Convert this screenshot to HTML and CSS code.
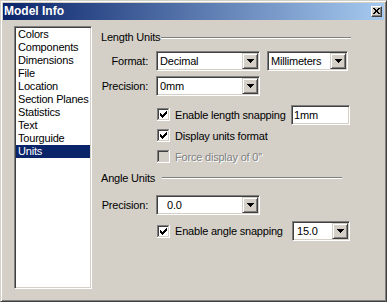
FILE: index.html
```html
<!DOCTYPE html>
<html>
<head>
<meta charset="utf-8">
<link rel="stylesheet" href="styles.css">
</head>
<body>
<div class="window">
  <div class="titlebar">
    <span class="title">Model Info</span>
    <span class="close-btn"><svg width="7" height="6" viewBox="0 0 7 6" shape-rendering="crispEdges"><path d="M0 0h2v1H0z M5 0h2v1H5z M1 1h2v1H1z M4 1h2v1H4z M2 2h3v1H2z M2 3h3v1H2z M1 4h2v1H1z M4 4h2v1H4z M0 5h2v1H0z M5 5h2v1H5z" fill="#000"/></svg></span>
  </div>
  <div class="content">
    <ul class="listbox">
      <li>Colors</li>
      <li>Components</li>
      <li>Dimensions</li>
      <li>File</li>
      <li>Location</li>
      <li>Section Planes</li>
      <li>Statistics</li>
      <li>Text</li>
      <li>Tourguide</li>
      <li class="selected">Units</li>
    </ul>
    <div class="panel">
      <div class="group-head head-length"><span class="head-text">Length Units</span><span class="rule rule-length"></span></div>

      <div class="row row-format">
        <span class="lbl">Format:</span>
        <div class="combo combo-wide"><span class="combo-text">Decimal</span><span class="drop"><svg width="7" height="4" viewBox="0 0 7 4" shape-rendering="crispEdges"><path d="M0 0h7v1H0z M1 1h5v1H1z M2 2h3v1H2z M3 3h1v1H3z" fill="#000"/></svg></span></div>
        <div class="combo combo-unit"><span class="combo-text">Millimeters</span><span class="drop"><svg width="7" height="4" viewBox="0 0 7 4" shape-rendering="crispEdges"><path d="M0 0h7v1H0z M1 1h5v1H1z M2 2h3v1H2z M3 3h1v1H3z" fill="#000"/></svg></span></div>
      </div>

      <div class="row row-precision">
        <span class="lbl">Precision:</span>
        <div class="combo combo-wide"><span class="combo-text">0mm</span><span class="drop"><svg width="7" height="4" viewBox="0 0 7 4" shape-rendering="crispEdges"><path d="M0 0h7v1H0z M1 1h5v1H1z M2 2h3v1H2z M3 3h1v1H3z" fill="#000"/></svg></span></div>
      </div>

      <div class="check-row check-first">
        <span class="checkbox"><svg width="13" height="13" viewBox="0 0 13 13" shape-rendering="crispEdges"><rect width="13" height="13" fill="#fff"/><path d="M0 0h12v1H0z M0 0h1v12H0z" fill="#808080"/><path d="M1 1h10v1H1z M1 1h1v10H1z" fill="#404040"/><path d="M1 11h11v1H1z M11 1h1v11h-1z" fill="#d4d0c8"/><path d="M9 3h1v1H9z M8 4h2v1H8z M3 5h1v1H3z M7 5h3v1H7z M3 6h2v1H3z M6 6h3v1H6z M3 7h5v1H3z M4 8h3v1H4z M5 9h1v1H5z" fill="#000"/></svg></span>
        <span class="check-label label-length">Enable length snapping</span>
        <span class="textbox">1mm</span>
      </div>

      <div class="check-row">
        <span class="checkbox"><svg width="13" height="13" viewBox="0 0 13 13" shape-rendering="crispEdges"><rect width="13" height="13" fill="#fff"/><path d="M0 0h12v1H0z M0 0h1v12H0z" fill="#808080"/><path d="M1 1h10v1H1z M1 1h1v10H1z" fill="#404040"/><path d="M1 11h11v1H1z M11 1h1v11h-1z" fill="#d4d0c8"/><path d="M9 3h1v1H9z M8 4h2v1H8z M3 5h1v1H3z M7 5h3v1H7z M3 6h2v1H3z M6 6h3v1H6z M3 7h5v1H3z M4 8h3v1H4z M5 9h1v1H5z" fill="#000"/></svg></span>
        <span class="check-label">Display units format</span>
      </div>

      <div class="check-row">
        <span class="checkbox"><svg width="13" height="13" viewBox="0 0 13 13" shape-rendering="crispEdges"><rect width="13" height="13" fill="#fff"/><path d="M0 0h12v1H0z M0 0h1v12H0z" fill="#808080"/><path d="M1 1h10v1H1z M1 1h1v10H1z" fill="#404040"/><path d="M1 11h11v1H1z M11 1h1v11h-1z" fill="#d4d0c8"/><rect x="2" y="2" width="9" height="9" fill="#d4d0c8"/></svg></span>
        <span class="check-label disabled">Force display of 0''</span>
      </div>

      <div class="group-head head-angle"><span class="head-text">Angle Units</span><span class="rule rule-angle"></span></div>

      <div class="row row-angle-precision">
        <span class="lbl">Precision:</span>
        <div class="combo combo-wide"><span class="combo-text text-angle">0.0</span><span class="drop"><svg width="7" height="4" viewBox="0 0 7 4" shape-rendering="crispEdges"><path d="M0 0h7v1H0z M1 1h5v1H1z M2 2h3v1H2z M3 3h1v1H3z" fill="#000"/></svg></span></div>
      </div>

      <div class="check-row check-angle">
        <span class="checkbox"><svg width="13" height="13" viewBox="0 0 13 13" shape-rendering="crispEdges"><rect width="13" height="13" fill="#fff"/><path d="M0 0h12v1H0z M0 0h1v12H0z" fill="#808080"/><path d="M1 1h10v1H1z M1 1h1v10H1z" fill="#404040"/><path d="M1 11h11v1H1z M11 1h1v11h-1z" fill="#d4d0c8"/><path d="M9 3h1v1H9z M8 4h2v1H8z M3 5h1v1H3z M7 5h3v1H7z M3 6h2v1H3z M6 6h3v1H6z M3 7h5v1H3z M4 8h3v1H4z M5 9h1v1H5z" fill="#000"/></svg></span>
        <span class="check-label label-angle">Enable angle snapping</span>
        <div class="combo combo-snap"><span class="combo-text text-snap">15.0</span><span class="drop"><svg width="7" height="4" viewBox="0 0 7 4" shape-rendering="crispEdges"><path d="M0 0h7v1H0z M1 1h5v1H1z M2 2h3v1H2z M3 3h1v1H3z" fill="#000"/></svg></span></div>
      </div>
    </div>
  </div>
</div>
</body>
</html>
```

FILE: styles.css
```css
* { box-sizing: border-box; }

html, body {
  margin: 0;
  padding: 0;
  background: #d4d0c8;
}

body {
  font-family: "Liberation Sans", Arial, sans-serif;
  font-size: 11px;
  letter-spacing: -0.2px;
  color: #000;
}

.window {
  width: 387px;
  height: 302px;
  background: #d4d0c8;
  border: 1px solid;
  border-color: #d4d0c8 #404040 #404040 #d4d0c8;
  box-shadow: inset 1px 1px #ffffff, inset -1px -1px #808080;
  padding: 2px;
  display: flex;
  flex-direction: column;
}

.titlebar {
  height: 17px;
  background: linear-gradient(to right, #0a246a, #a6caf0);
  display: flex;
  align-items: center;
  justify-content: space-between;
  padding: 0 2px 0 1px;
}

.title {
  color: #fff;
  font-weight: bold;
  font-size: 12px;
  letter-spacing: 0;
  line-height: 17px;
  white-space: nowrap;
}

.close-btn {
  width: 11px;
  height: 11px;
  background: #d4d0c8;
  border: 1px solid;
  border-color: #ffffff #404040 #404040 #ffffff;
  box-shadow: inset -1px -1px #808080;
  display: flex;
  align-items: center;
  justify-content: center;
  padding: 0 1px 1px 0;
}

.close-btn svg { display: block; }

.content {
  display: flex;
  align-items: flex-start;
  padding: 6px 0 0 11px;
}

.listbox {
  list-style: none;
  margin: 0;
  width: 78px;
  height: 263px;
  background: #fff;
  border: 1px solid;
  border-color: #808080 #ffffff #ffffff #808080;
  box-shadow: inset 1px 1px #404040, inset -1px -1px #d4d0c8;
  padding: 1px;
  overflow: hidden;
}

.listbox li {
  height: 13px;
  line-height: 13px;
  padding-left: 2px;
  white-space: nowrap;
  overflow: hidden;
}

.listbox li.selected {
  background: #0a246a;
  color: #fff;
}

.panel {
  margin-left: 9px;
  display: flex;
  flex-direction: column;
}

.group-head {
  display: flex;
  align-items: flex-start;
  height: 13px;
  line-height: 13px;
  white-space: nowrap;
}

.head-length { margin-top: 5px; width: 250px; }
.head-angle { margin-top: 5px; width: 241px; }

.rule {
  height: 2px;
  border-top: 1px solid #808080;
  border-bottom: 1px solid #ffffff;
  margin-left: auto;
}

.rule-length { width: 190px; margin-top: 6px; }
.rule-angle { width: 180px; margin-top: 5px; }

.row {
  display: flex;
  align-items: center;
  height: 20px;
}

.row-format { margin-top: 7px; }
.row-precision { margin-top: 5px; }
.row-angle-precision { margin-top: 10px; }

.lbl {
  width: 47px;
  text-align: right;
  margin-right: 8px;
  white-space: nowrap;
}

.combo {
  display: flex;
  height: 20px;
  background: #fff;
  border: 1px solid;
  border-color: #808080 #ffffff #ffffff #808080;
  box-shadow: inset 1px 1px #404040, inset -1px -1px #d4d0c8;
  padding: 1px;
}

.combo-wide { width: 104px; }
.combo-unit { width: 81px; margin-left: 7px; }
.combo-snap { width: 58px; }

.combo-text {
  flex: 1;
  line-height: 16px;
  padding-left: 2px;
  white-space: nowrap;
  overflow: hidden;
}

.text-angle { padding-left: 9px; }
.text-snap { padding-left: 3px; }

.drop {
  width: 16px;
  height: 16px;
  background: #d4d0c8;
  border: 1px solid;
  border-color: #d4d0c8 #404040 #404040 #d4d0c8;
  box-shadow: inset 1px 1px #ffffff, inset -1px -1px #808080;
  display: flex;
  align-items: center;
  justify-content: center;
}

.drop svg { display: block; }

.check-row {
  display: flex;
  align-items: center;
  height: 21px;
  padding-left: 56px;
}

.check-first { margin-top: 8px; }
.check-angle { margin-top: 6px; height: 20px; }

.checkbox {
  width: 13px;
  height: 13px;
  flex: none;
}

.checkbox svg { display: block; }

.check-label {
  margin-left: 5px;
  white-space: nowrap;
}

.label-length { width: 116px; }
.label-angle { width: 117px; }

.disabled {
  color: #808080;
  text-shadow: 1px 1px #ffffff;
}

.textbox {
  width: 59px;
  height: 20px;
  background: #fff;
  border: 1px solid;
  border-color: #808080 #ffffff #ffffff #808080;
  box-shadow: inset 1px 1px #404040, inset -1px -1px #d4d0c8;
  padding: 1px 1px 1px 2px;
  line-height: 16px;
  white-space: nowrap;
}
```
